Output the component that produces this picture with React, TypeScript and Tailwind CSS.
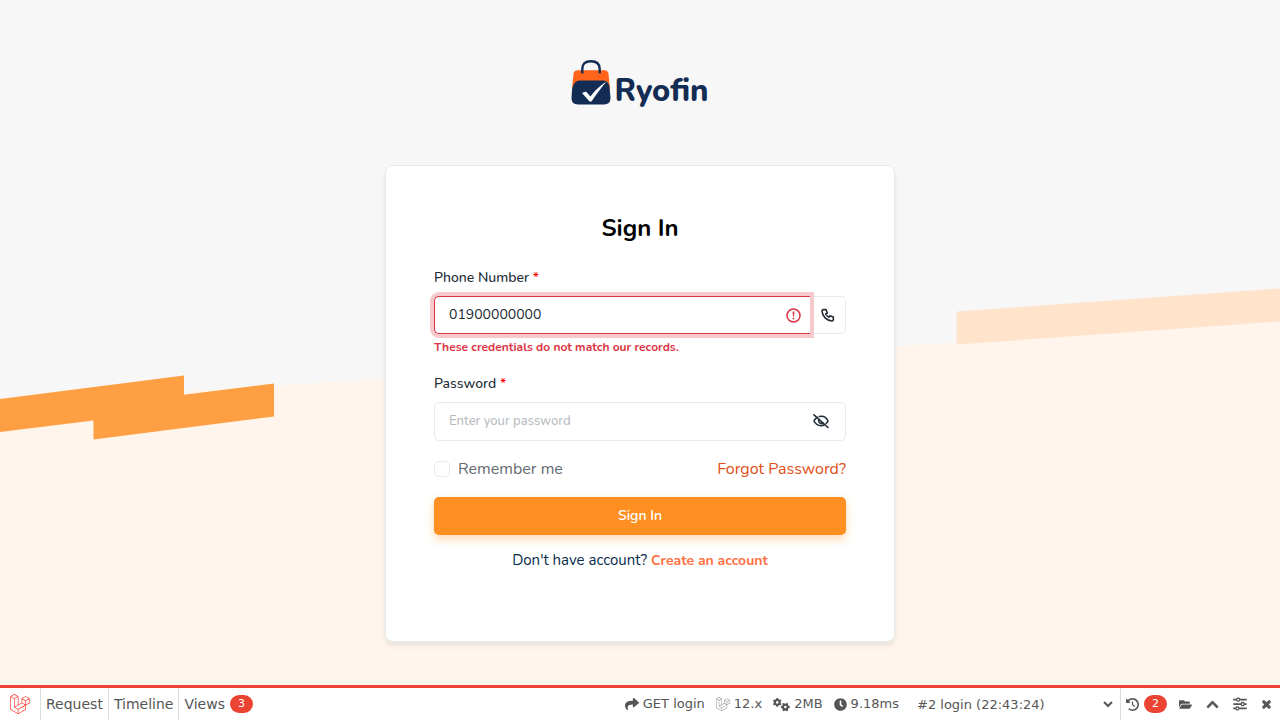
import { TbPhone } from "react-icons/tb";
import { FaShare, FaClock, FaFolderOpen, FaChevronUp, FaLaravel, FaTimes } from "react-icons/fa";
import { FaClockRotateLeft, FaGears, FaSliders } from "react-icons/fa6";

function Backdrop() {
  return (
    <svg className="absolute inset-0 h-full w-full" viewBox="0 0 1280 685" preserveAspectRatio="none" aria-hidden="true">
      <rect width="1280" height="685" fill="#f7f7f7" />
      <path d="M0 403L1280 322V685H0Z" fill="#fff5ec" />
      <path d="M956.500 311.500L1280 288.500V321.500L956.500 344.500Z" fill="#ffe3cb" />
      <path d="M0 399L184 375.500V394.700L274 383.500V416.500L93.500 439.500V420.500L0 432Z" fill="#ff9f43" />
    </svg>
  );
}

function Logo() {
  return (
    <a href="#" className="flex items-end gap-[3px]" aria-label="Ryofin">
      <svg className="h-[46px] w-[40px]" viewBox="0 0 40 46" fill="none" aria-hidden="true">
        <path d="M2.500 14Q3 10.300 6.500 10.300H33.500Q37 10.300 37.500 14L39 29H1Z" fill="#ff6418" />
        <path d="M11.300 13.500V9Q11.300 1.300 20 1.300Q28.700 1.300 28.700 9V13.500" stroke="#132c54" strokeWidth="2.400" />
        <path d="M9 20.500H32C36.500 20.500 38 24 38.500 27L39.500 38Q39.500 44.500 33 44.500H7Q.5 44.500.5 38L1 30C2 24.500 4 20.500 9 20.500Z" fill="#132c54" />
        <path d="M11 33L15 31.500L19.500 36.500C24 30.500 28.500 26 35.500 21.500C30.500 27.500 25.500 34 20.500 41.500H18.500Z" fill="#fff" />
      </svg>
      <span className="text-[31px] leading-[30px] font-extrabold text-[#132c54]">Ryofin</span>
    </a>
  );
}

function EyeOff() {
  return (
    <svg className="h-4 w-4" viewBox="0 0 16 16" fill="none" stroke="currentColor" strokeWidth="1.600" strokeLinecap="round" aria-hidden="true">
      <path d="M4.200 3.300C2.800 4.200 1.600 5.500 1 7C2.400 10 5 11.600 8 11.600C9.200 11.600 10.500 11.300 11.500 10.800M6.300 2.500C10.300 1.700 13.500 3.600 15 7C14.600 7.900 14 8.700 13.200 9.400" />
      <path d="M6 5.500C5 7.300 6.300 9.400 8.200 9.400C8.900 9.400 9.400 9.200 9.800 8.800" />
      <path d="M1 .8L15 13.500" />
    </svg>
  );
}

const barItem = "flex items-center gap-1";

export default function App() {
  return (
    <div className="flex min-h-screen flex-col font-[Nunito,Lato,sans-serif] text-[#212b36]">
      <main className="relative flex grow flex-col items-center px-4 pb-[43px]">
        <Backdrop />
        <div className="relative mt-[60px] mb-[59px]">
          <Logo />
        </div>
        <form className="relative flex w-full max-w-[510px] flex-col rounded-lg border border-[#e6eaed] bg-white px-12 pt-12 pb-[69px] shadow-[0_4px_4px_rgba(180,180,180,0.25)]">
          <h1 className="text-center text-2xl leading-7 font-bold text-black">Sign In</h1>
          <label htmlFor="phone" className="mt-[25px] text-sm leading-[21px] font-medium">
            Phone Number <span className="text-[#ff0000]">*</span>
          </label>
          <div className="mt-2 flex h-[38px]">
            <div className="relative z-10 flex grow rounded-l-[5px] border border-r-0 border-[#dc3545] bg-white shadow-[0_0_0_4px_#f6c9cd]">
              <input id="phone" defaultValue="01900000000" className="min-w-0 grow pl-[14px] text-sm outline-none" />
              <svg className="mr-[9px] h-4 w-4 self-center text-[#dc3545]" viewBox="0 0 16 16" fill="none" stroke="currentColor" aria-hidden="true">
                <circle cx="8.500" cy="8.500" r="6.500" strokeWidth="1.500" />
                <path d="M7.500 4.500H9.500L9 9.500H8Z" fill="currentColor" stroke="none" />
                <circle cx="8.500" cy="11.500" r=".9" fill="currentColor" stroke="none" />
              </svg>
            </div>
            <span className="flex w-9 items-center justify-center rounded-r-[5px] border border-l-0 border-[#e6eaed] bg-white">
              <TbPhone size={16} strokeWidth={2.4} />
            </span>
          </div>
          <p className="mt-1 text-xs leading-[18px] font-bold text-[#dc3545]">These credentials do not match our records.</p>
          <label htmlFor="password" className="mt-[17px] text-sm leading-[21px] font-medium">
            Password <span className="text-[#ff0000]">*</span>
          </label>
          <div className="mt-2 flex h-[39px] items-center rounded-[5px] border border-[#e6eaed] bg-white pr-4">
            <input id="password" type="password" placeholder="Enter your password" className="min-w-0 grow pl-[14px] text-[13px] outline-none placeholder:font-medium placeholder:text-[#b8bcc1]" />
            <button type="button" aria-label="Show password"><EyeOff /></button>
          </div>
          <div className="mt-4 flex items-center justify-between text-base leading-6">
            <label className="flex items-center gap-2 text-[#646b72]">
              <input type="checkbox" className="h-4 w-4 appearance-none rounded-[5px] border border-[#e6eaed] bg-white" />
              Remember me
            </label>
            <a href="#" className="text-[#e04f16]">Forgot Password?</a>
          </div>
          <button type="submit" className="mt-4 h-[38px] rounded-[5px] bg-[#fe8f20] text-sm font-semibold text-white shadow-[0_4px_10px_rgba(254,143,32,0.35)]">Sign In</button>
          <p className="mt-[13px] text-center text-[15px] leading-6 text-[#092c4c]">
            Don't have account? <a href="#" className="text-sm font-bold text-[#ff7043]">Create an account</a>
          </p>
        </form>
      </main>
      <footer className="flex h-[35px] items-center border-t-[3px] border-[#eb4432] bg-white font-['DejaVu_Sans',sans-serif] text-[13px] whitespace-nowrap text-[#555]">
        <a href="#" aria-label="Laravel" className="flex h-full w-[41px] items-center justify-center border-r border-[#ddd] text-[#ff2d20]"><FaLaravel size={20} /></a>
        <button type="button" className="h-full border-r border-[#ddd] px-[5px] text-sm">Request</button>
        <button type="button" className="h-full border-r border-[#ddd] px-[5px] text-sm">Timeline</button>
        <button type="button" className="flex h-full items-center gap-[5px] px-[5px] text-sm">
          Views <span className="rounded-full bg-[#eb4432] px-2 text-[11px] leading-[18px] text-white">3</span>
        </button>
        <div className="ml-auto flex items-center gap-[11px]">
          <span className={barItem}><FaShare size={14} />GET login</span>
          <span className={barItem}><FaLaravel size={14} color="#888" />12.x</span>
          <span className={barItem}><FaGears size={17} />2MB</span>
          <span className={barItem}><FaClock size={13} />9.18ms</span>
        </div>
        <select aria-label="Request history" className="ml-[14px] h-8 w-[203px] bg-white text-[13px]">
          <option>#2 login (22:43:24)</option>
        </select>
        <div className="ml-1 flex h-full items-center border-l border-[#ddd] pl-[5px]">
          <button type="button" className="flex items-center gap-[5px]" aria-label="History, 2 requests"><FaClockRotateLeft size={13} />
            <span className="rounded-full bg-[#eb4432] px-2 text-[11px] leading-[18px] text-white">2</span>
          </button>
          <button type="button" className="ml-3" aria-label="Open"><FaFolderOpen size={13} /></button>
          <button type="button" className="ml-[14px]" aria-label="Minimize"><FaChevronUp size={13} stroke="currentColor" strokeWidth={30} /></button>
          <button type="button" className="ml-[14px]" aria-label="Settings"><FaSliders size={14} /></button>
          <button type="button" className="mr-2 ml-[14px]" aria-label="Close"><FaTimes size={11} stroke="currentColor" strokeWidth={50} /></button>
        </div>
      </footer>
    </div>
  );
}
